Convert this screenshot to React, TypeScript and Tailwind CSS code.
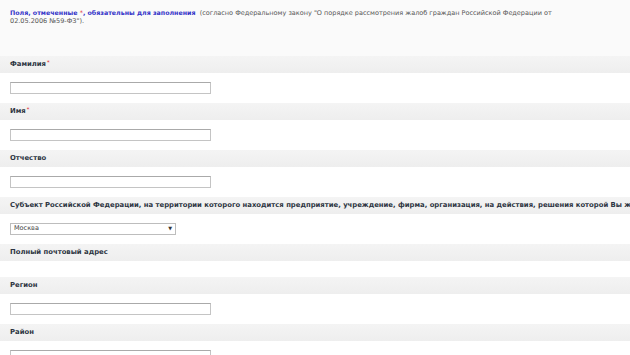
import React from 'react';

type Field = { label: string; required?: boolean; kind: 'input' | 'select' | 'none' };

const fields: Field[] = [
  { label: 'Фамилия', required: true, kind: 'input' },
  { label: 'Имя', required: true, kind: 'input' },
  { label: 'Отчество', kind: 'input' },
  {
    label:
      'Субъект Российской Федерации, на территории которого находится предприятие, учреждение, фирма, организация, на действия, решения которой Вы жалуетесь',
    kind: 'select',
  },
  { label: 'Полный почтовый адрес', kind: 'none' },
  { label: 'Регион', kind: 'input' },
  { label: 'Район', kind: 'input' },
];

export default function App() {
  return (
    <div className="min-h-screen w-[630px] overflow-hidden bg-white font-['DejaVu_Sans',sans-serif] text-[6.5px] text-[#555]">
      {/* Intro */}
      <div className="h-[56px] bg-[#fafafa] px-[10px] pt-[9px] leading-[8px]">
        <span className="text-[6.3px] font-bold text-[#3434c8]">Поля, отмеченные </span>
        <span className="text-[#e03030]">*</span>
        <span className="text-[6.3px] font-bold text-[#3434c8]">, обязательны для заполнения</span>
        <span>&nbsp; (согласно Федеральному закону "О порядке рассмотрения жалоб граждан Российской Федерации от</span>
        <br />
        <span>02.05.2006 №59-ФЗ").</span>
      </div>

      {fields.map(f => (
        <div key={f.label}>
          <div className="flex h-[17px] items-center overflow-hidden whitespace-nowrap bg-gradient-to-b from-[#f4f4f4] to-[#eeeeee] px-[10px] text-[6.85px] font-bold text-[#2d3542]">
            {f.label}
            {f.required && <span className="ml-[1px] -translate-y-[2px] text-[5px] text-[#e03030]">*</span>}
          </div>
          {f.kind === 'input' && (
            <div className="flex h-[30px] items-center px-[10px]">
              <div className="h-[12px] w-[201px] border border-[#c4c4c4] border-t-[#aaa] bg-white" />
            </div>
          )}
          {f.kind === 'select' && (
            <div className="flex h-[30px] items-center px-[10px]">
              <div className="flex h-[12px] w-[166px] items-center justify-between border border-[#bdbdbd] bg-white pl-[3px] pr-[3px] text-[6.5px] text-[#444]">
                <span>Москва</span>
                <span className="text-[5px] text-[#333]">▼</span>
              </div>
            </div>
          )}
          {f.kind === 'none' && <div className="h-[16px]" />}
        </div>
      ))}
    </div>
  );
}
